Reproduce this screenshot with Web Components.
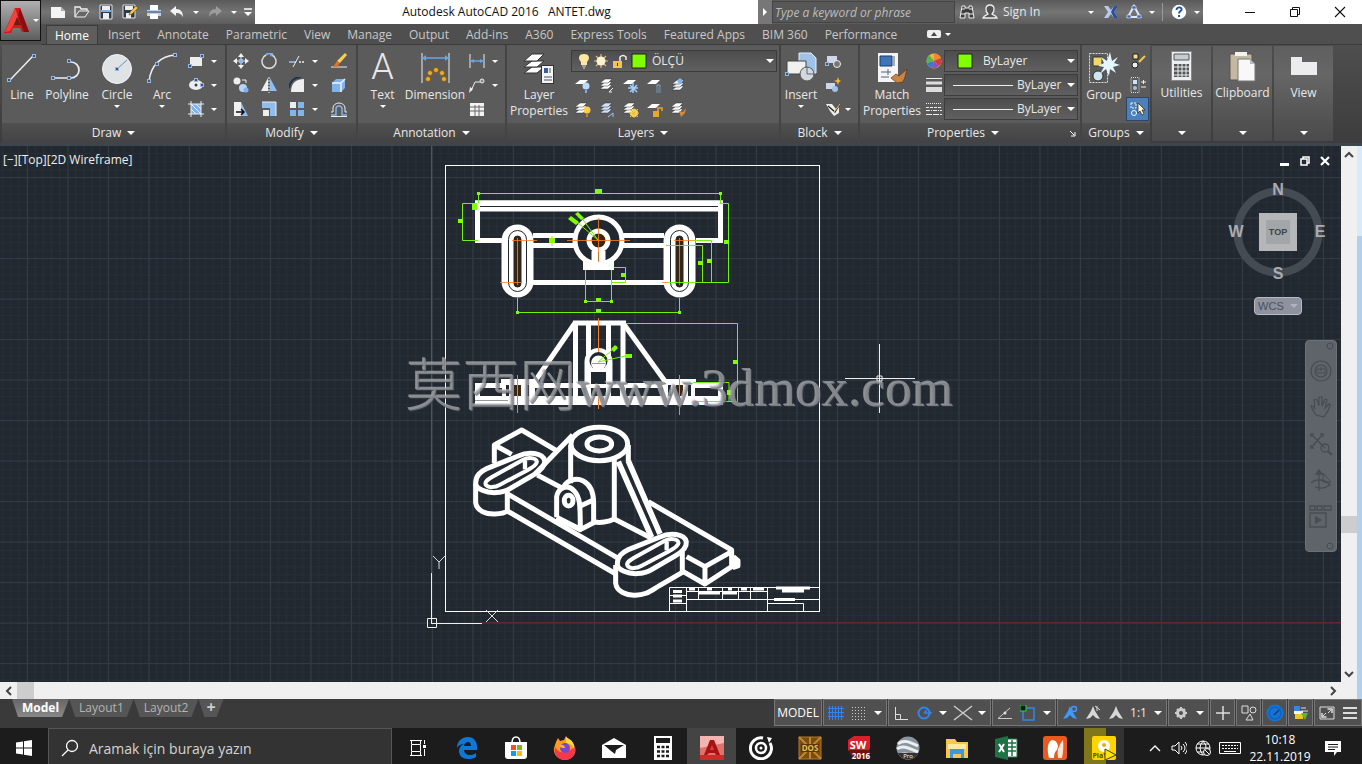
<!DOCTYPE html>
<html lang="tr">
<head>
<meta charset="utf-8">
<title>Autodesk AutoCAD 2016 ANTET.dwg</title>
<style>
	html, body {
		height: 100%;
		margin: 0;
	}
	body {
		font: 12px/16px "Open Sans", "Noto Sans", sans-serif;
		color: #e8e8e8;
		background: #3a3a3a;
		overflow: hidden;
	}
</style>
</head>
<body>
<cad-app></cad-app>

<script>
// icon name -> [width, height, svg markup]
const stack = (x, y, c = "#fff") => `<g fill="${c}" stroke="#333" stroke-width=".5"><path d="M${x} ${y + 8}l5-4h7l-4 4z"/><path d="M${x} ${y + 5}l5-4h7l-4 4z"/><path d="M${x} ${y + 2}l5-4h7l-4 4z"/></g>`;
const sheet = `<path d="M0 6l5-4h8l-4 4z" fill="#fff"/>`;
const node = (x, y) => `<rect x="${x - 1.5}" y="${y - 1.5}" width="3" height="3" fill="#4a4f58" stroke="#8fb8ee"/>`;
const person = (c) => `<path d="M8 1l2 5 5 8-4-1-3-3-3 3-4 1 5-8z" fill="${c}"/>`;

const ICONS = {
	logo: [32, 32, `<path d="M14 3h5l9 24h-7l-2-4-7 0-2 5H3z" fill="#d3171b"/><path d="M14 3l3 9-8 14-5 1z" fill="#f0443b"/><path d="M19 3l9 24h-5L17 11z" fill="#8d0c10"/><path d="M13 20l3-8 4 8z" fill="#6f1a1a"/>`],
	new: [16, 16, `<path d="M1 3h10l4 4v7H1z" fill="#f4f4f4"/><path d="M11 3v4h4z" fill="#aaa"/>`],
	open: [16, 16, `<path d="M1 13V3h5l1 2h6v2" fill="none" stroke="#eee" stroke-width="1.3"/><path d="M1 13l4-6h10l-4 6z" fill="#666" stroke="#eee"/>`],
	save: [16, 16, `<path d="M2 1h12v14H2z" fill="#30394a" stroke="#e4e4e4"/><path d="M5 9h6v6H5zM4 2h8v4H4z" fill="#eee"/><path d="M3 7h10" stroke="#7fb0e4" stroke-width="2"/>`],
	saveas: [16, 16, `<path d="M1 1h12v13H1z" fill="#30394a" stroke="#e4e4e4"/><path d="M4 9h5v5H4zM3 2h8v4H3z" fill="#eee"/><path d="M7 11l1-3 6-6 2 2-6 6z" fill="#f3c648" stroke="#6b4d10" stroke-width=".6"/>`],
	print: [16, 16, `<path d="M4 1h8v5H4z" fill="#fff"/><path d="M1 6h14v6H1z" fill="#b9d4ee"/><path d="M1 8h14" stroke="#334"/><path d="M4 10h8v5H4z" fill="#fff"/>`],
	undo: [16, 16, `<path d="M1 7l6-5v3c5 0 7 3 7 8-2-3-3-4-7-4v3z" fill="#f2f2f2"/>`],
	redo: [16, 16, `<path d="M15 7L9 2v3c-5 0-7 3-7 8 2-3 3-4 7-4v3z" fill="#9c9c9c"/>`],
	customize: [10, 8, `<path d="M1 1h8" stroke="#fff" stroke-width="1.5"/><path d="M1 4h8L5 8z" fill="#fff"/>`],
	caret: [8, 4, `<path d="M0 0h8L4 4z" fill="#fff"/>`],
	smallcaret: [6, 3, `<path d="M0 0h6L3 3z" fill="#fff"/>`],
	play: [6, 8, `<path d="M1 0v8l4-4z" fill="#fff"/>`],
	binoculars: [16, 16, `<path d="M3 2h3v2h4V2h3l2 12h-5V9H6v5H1z" fill="#3c3c3c" stroke="#eee"/><path d="M3 5h3M10 5h3M2 10h4M10 10h4" stroke="#eee"/>`],
	user: [16, 16, `<path d="M1 14c1-3 4-3 5-4C3 7 3 1 8 1s5 6 2 9c1 1 4 1 5 4z" fill="#555" stroke="#eee" stroke-width="1.3"/>`],
	exchange: [16, 16, `<path d="M1 2h4l3 4 3-4h4l-4 6 4 6h-4l-3-4-3 4H1l4-6z" fill="#b8c9ec"/><path d="M11 2h4l-4 6 4 6h-4L8 8z" fill="#2b4f9c"/>`],
	a360: [16, 16, `<path d="M8 2l6 11H2z" fill="none" stroke="#dfe7fa" stroke-width="2"/><path d="M6 2h4v3H6zM1 11h4v3H1zM11 11h4v3h-4z" fill="#4068b4" stroke="#dfe7fa" stroke-width=".6"/>`],
	help: [16, 16, `<circle cx="8" cy="8" r="7.2" fill="#fff"/><path d="M5.5 6c0-4 6-3 5 0-1 1.500-2.500 1.500-2.500 3.500M8 11v2" fill="none" stroke="#1f4f9f" stroke-width="1.900"/>`],
	minimize: [12, 12, `<path d="M1 6.500h10" stroke="#111"/>`],
	restore: [12, 12, `<path d="M1.500 3.500h7v7h-7zM3.500 3V1.500h7v7H9" fill="none" stroke="#111"/>`],
	close: [12, 12, `<path d="M1 1l10 10M11 1L1 11" stroke="#111" stroke-width="1.100"/>`],
	ribbonmode: [14, 8, `<rect width="14" height="8" rx="2" fill="#eee"/><path d="M4 6h6L7 2z" fill="#444"/>`],

	line: [32, 32, `<path d="M4 28L27 4" stroke="#eee" stroke-width="1.500"/>${node(3, 28)}${node(28, 4)}`],
	polyline: [32, 32, `<path d="M2 26h18a8 8 0 0 0 0-16h-2" fill="none" stroke="#eee" stroke-width="1.700"/>${node(2, 26)}${node(18, 26)}${node(18, 9)}`],
	circle: [32, 32, `<circle cx="16" cy="17" r="14.500" fill="#dfe3e6" stroke="#f4f4f4"/><path d="M16 17L26 8" stroke="#6a8cb4"/>${node(16, 17)}`],
	arc: [32, 32, `<path d="M3 29C5 13 15 4 29 3" fill="none" stroke="#eee" stroke-width="1.500"/>${node(3, 29)}${node(11, 12)}${node(29, 3)}`],
	rectangle: [16, 16, `<path d="M2 4h12v9H2z" fill="#eee"/>${node(2, 13)}${node(14, 3)}`],
	ellipse: [16, 16, `<ellipse cx="8" cy="8" rx="7" ry="5" fill="#eee"/><circle cx="8" cy="8" r="1.500" fill="#345"/>${node(14, 8)}${node(8, 3)}`],
	hatch: [16, 16, `<path d="M3 3h10v10H3z" fill="#7fb2ee"/><path d="M3 8l5 5M3 3l10 10M8 3l5 5" stroke="#e4f0ff"/><path d="M3 0v16M13 0v16M0 3h16M0 13h16" stroke="#eee"/>`],
	move: [16, 16, `<path d="M8 0l3 4H5zM8 16l3-4H5zM0 8l4-3v6zM16 8l-4-3v6z" fill="#f2f2f2"/><rect x="6" y="6" width="4" height="4" fill="#8bbaf0"/><path d="M8 4v2M8 10v2M4 8h2M10 8h2" stroke="#eee"/>`],
	rotate: [16, 16, `<path d="M11 2a7 7 0 1 1-6 0" fill="none" stroke="#ddd" stroke-width="1.500"/><path d="M5 2c2-2 5-2 7 0" fill="none" stroke="#7db2ee" stroke-width="2"/><path d="M8 0l4 0-2 4z" fill="#7db2ee"/>`],
	trim: [16, 16, `<path d="M0 9h7" stroke="#9cc3f2" stroke-width="1.500"/><path d="M4 14L10 3" stroke="#eee"/><path d="M10 9h2M13 9h2" stroke="#eee" stroke-width="1.500"/>`],
	erase: [16, 16, `<path d="M0 14h16" stroke="#eee"/><path d="M14 0l2 2-7 8-3-2z" fill="#f5d14d"/><path d="M6 8l3 2-3 4-4 0z" fill="#e2712b"/>`],
	copy: [16, 16, `<circle cx="4" cy="4" r="3.500" fill="#eee"/><circle cx="10" cy="11" r="4" fill="#b8d4f4"/><circle cx="13" cy="13" r="2.500" fill="#7fb2ee"/><path d="M9 3h4v3" stroke="#eee" fill="none"/>`],
	mirror: [16, 16, `<path d="M7 1v13H0z" fill="#eee"/><path d="M9 1v13h7z" fill="#8fbdf0"/><path d="M8 0v16" stroke="#eee" stroke-dasharray="2 1"/>`],
	fillet: [16, 16, `<path d="M2 15C2 7 6 2 15 2v13z" fill="#eee"/><path d="M0 11C1 5 5 0 12 0" fill="none" stroke="#20344e" stroke-width="2"/>`],
	explode: [16, 16, `<path d="M1 6l4-4h9v9l-4 4H1z" fill="#7fb2ee"/><path d="M1 6h9v9M10 6l4-4" fill="none" stroke="#eef5ff" stroke-width="1.500"/>`],
	stretch: [16, 16, `<path d="M1 1h7v14H1z" fill="#f2f2f2"/><path d="M8 1l7 14H8z" fill="#8fbdf0"/><path d="M3 11h7M8 8l3 3-3 3" stroke="#111" stroke-width="1.500" fill="none"/>`],
	scale: [16, 16, `<path d="M1 1h14v14H9V7H1z" fill="#8fbdf0"/><path d="M2 9h6v6H2z" fill="#eee"/><path d="M1 1h14v14" fill="none" stroke="#eee"/>`],
	array: [16, 16, `<path d="M1 1h6v6H1z" fill="#eee"/><path d="M9 1h6v6H9zM1 9h6v6H1zM9 9h6v6H9z" fill="#82b4ee"/>`],
	offset: [16, 16, `<path d="M0 14h5V8a3 3 0 0 1 6 0v6h5" fill="none" stroke="#82b4ee" stroke-width="1.500"/><path d="M0 11h2V7a6 5 0 0 1 12 0v4h2M0 15.500h16" fill="none" stroke="#eee"/>`],
	dimension: [32, 32, `<path d="M3 1v30M30 1v30" stroke="#eee"/><path d="M3 6h27" stroke="#6aa3e8" stroke-width="1.500"/><path d="M3 6l4-3v6zM30 6l-4-3v6z" fill="#6aa3e8"/><g fill="#e8ac2e" stroke="#7a4a0c" stroke-width=".6"><circle cx="9" cy="27" r="2.500"/><circle cx="11" cy="21" r="2.500"/><circle cx="17" cy="18" r="2.500"/><circle cx="23" cy="21" r="2.500"/><circle cx="25" cy="27" r="2.500"/></g>`],
	dimlinear: [16, 16, `<path d="M1 1v14M15 1v14" stroke="#eee"/><path d="M1 8h14" stroke="#6aa3e8" stroke-width="1.500"/><path d="M1 8l4-2v4zM15 8l-4-2v4z" fill="#6aa3e8"/>`],
	leader: [16, 16, `<path d="M2 14L6 5h5" fill="none" stroke="#eee"/><path d="M0 16l1-6 3 2z" fill="#eee"/><circle cx="13" cy="4" r="2" fill="#888" stroke="#eee"/>`],
	table: [16, 16, `<path d="M1 2h14v13H1z" fill="#f2f2f2"/><path d="M1 6h14M1 10h14M6 4v11M10 4v11" stroke="#666"/>`],
	layerprops: [32, 32, `<g fill="#fff" stroke="#333"><path d="M1 21l8-6h12l-7 6z"/><path d="M1 15l8-6h12l-7 6z"/><path d="M1 9l8-7h12l-7 7z"/></g><rect x="18.500" y="13.500" width="12" height="18" fill="#f4f4f4" stroke="#333"/><path d="M21 16h4v5h-4z" fill="#345f9c"/><path d="M27 16v5M21 25h8M21 28h8" stroke="#456"/>`],
	bulb: [12, 16, `<path d="M6 1c6 0 6 5 3 8v3H3V9C0 6 0 1 6 1z" fill="#fbe7a0"/><path d="M4 13h4M5 15h2" stroke="#ddd"/>`],
	sun: [16, 16, `<path d="M8 1v14M1 8h14M3 3l10 10M13 3L3 13" stroke="#e2b888" stroke-width="1.200"/><circle cx="8" cy="8" r="4.500" fill="#fbf2cf"/>`],
	unlock: [16, 16, `<path d="M1 8h9v7H1z" fill="#f1c453"/><path d="M8 8V4q3-3 6 0v3" fill="none" stroke="#eee" stroke-width="1.500"/><path d="M5.500 10v3" stroke="#333"/>`],
	swatch: [16, 16, `<path d="M1 1h14v14H1z" fill="#7fff00" stroke="#222"/>`],
	layoff: [16, 16, `${sheet}<circle cx="11" cy="8" r="3.500" fill="#b9dbff"/><path d="M10 12h2v3h-2z" fill="#7ab0ea"/>`],
	layiso: [16, 16, `${stack(1, 3)}<path d="M14 10l-4 4h3" stroke="#eee" fill="none"/>`],
	layfrz: [16, 16, `${sheet}<path d="M10 5v10M5 10h10M7 7l7 7M14 7l-7 7" stroke="#9fd0ff" stroke-width="1.500"/>`],
	laylock: [16, 16, `${sheet}<path d="M9 9h5v6H9z" fill="#678"/><path d="M10 9V7h3v2" stroke="#8ab" fill="none"/>`],
	laymcur: [16, 16, `${stack(1, 4, "#eef5ff")}<circle cx="9" cy="3" r="2.500" fill="#82b4ee"/>`],
	layon: [16, 16, `${stack(0, 3)}<circle cx="12" cy="8" r="3.500" fill="#fbcf4a"/><path d="M11 12h2v3h-2z" fill="#c87a1c"/>`],
	layuniso: [16, 16, `${stack(1, 3, "#cfe2fa")}<path d="M9 15l5-4v4" stroke="#9cc6fa" fill="none"/>`],
	laythw: [16, 16, `${stack(0, 3)}<circle cx="11" cy="11" r="4" fill="#fbe168"/><path d="M11 6v10M6 11h10M7 7l8 8M15 7l-8 8" stroke="#e9b93c"/>`],
	layulk: [16, 16, `${sheet}<path d="M6 9h6v6H6z" fill="#e9a52c"/><path d="M11 9V6h4v3" stroke="#e9a52c" fill="none" stroke-width="1.500"/>`],
	laymatch: [16, 16, `${stack(0, 3)}<path d="M8 9l4 1 3-4-1 5-4 4z" fill="#d88a34"/>`],
	insert: [32, 32, `<path d="M14 1h12l5 5v15H14z" fill="#9fc2e8" stroke="#e4eefa"/><path d="M2 9h19v13H2z" fill="#f0f0f0" stroke="#444"/><circle cx="22" cy="22" r="7" fill="#d2d8dd" stroke="#555"/><path d="M22 15v7h7" fill="none" stroke="#567"/>${node(2, 22)}`],
	blockedit: [16, 16, `<path d="M2 3h10v7H2z" fill="#cfd6ea"/><circle cx="12" cy="11" r="3.500" fill="#777" stroke="#eee"/>${node(2, 11)}`],
	blocknew: [16, 16, `<path d="M1 6h9v6H1z" fill="#cfd6ea"/><circle cx="10" cy="12" r="3" fill="#9fc2e8"/><path d="M13 0l1 3 2 1-2 1-1 3-1-3-3-1 3-1z" fill="#f6b83a"/>`],
	attrib: [16, 16, `<path d="M1 3h6l4 5 3-3v7l-5 3-4-5z" fill="#eee"/><path d="M3 5l7 6 5-8" fill="none" stroke="#222" stroke-width="1.300"/><path d="M9 11l6-8" stroke="#f2c94a"/>`],
	match: [32, 32, `<path d="M2 1h20v29H2z" fill="#f4f4f4"/><path d="M4 4h12v10H4z" fill="#3f74b8" stroke="#1e3c66"/><path d="M18 4v10M5 20h10M12 17v6M5 25h8" stroke="#567"/><path d="M31 17l-8 7-3-2-5 4 6 5 6-1 2-5z" fill="#c88445" stroke="#5d3312" stroke-width=".7"/>`],
	wheel: [16, 16, `<circle cx="8" cy="8" r="7.500" fill="#e8ba34"/><path d="M8 8V.5A7.500 7.500 0 0 1 15 5z" fill="#ee8a34"/><path d="M8 8l7-3a7.500 7.500 0 0 1-2 8z" fill="#d83a3a"/><path d="M8 8l5 5a7.500 7.500 0 0 1-7 2z" fill="#8752c4"/><path d="M8 8l-2 7a7.500 7.500 0 0 1-5-5z" fill="#3a74d8"/><path d="M8 8l-7 2A7.500 7.500 0 0 1 3 2z" fill="#54b454"/>`],
	lineweight: [16, 16, `<path d="M0 1.500h16" stroke="#eee"/><path d="M0 6h16" stroke="#ddd" stroke-width="3"/><path d="M0 12.500h16" stroke="#ddd" stroke-width="5"/>`],
	linetype: [16, 16, `<path d="M0 2.500h16" stroke="#eee" stroke-dasharray="1 1"/><path d="M0 6.500h16" stroke="#eee" stroke-dasharray="3 1"/><path d="M0 9.500h16" stroke="#eee" stroke-dasharray="4 1 1 1"/><path d="M0 13.500h16" stroke="#eee" stroke-dasharray="6 1"/>`],
	group: [32, 32, `<path d="M1.500 1.500h18v29h-18z" fill="none" stroke="#ddd" stroke-dasharray="2 1"/><path d="M5 5h9v9H5z" fill="#f2d86a" stroke="#333"/><circle cx="10" cy="24" r="5" fill="#cfe7ef" stroke="#333"/><path d="M22 0l2 9 6-4-4 6 6 2-7 2 3 6-6-4-1 7-3-7-6 5 4-7-6-1 6-3-3-6 6 4z" fill="#e4f6ff"/>`],
	groupedit: [16, 16, `<path d="M3 1h5v5H3z" fill="#f2e38a" stroke="#222"/><circle cx="5" cy="12" r="3" fill="#eee" stroke="#222"/><path d="M9 9l6-6" stroke="#f2c94a" stroke-width="2"/>`],
	ungroup: [16, 16, `<path d="M1 .5h8v15H1z" fill="none" stroke="#ddd" stroke-dasharray="1 1"/><path d="M3 3h4v4H3z" fill="#cfe2fa"/><circle cx="5" cy="11" r="2" fill="#9fc2e8"/><path d="M11 5h5M13.500 3v4M11 10h5" stroke="#eee"/>`],
	groupsel: [16, 16, `<path d="M1 2h5v5H1z" fill="none" stroke="#dff" stroke-dasharray="2 1"/><circle cx="4" cy="12" r="2.500" fill="none" stroke="#dff"/><path d="M8 2v10l2-2 2 4 2-1-2-4h3z" fill="#fff7d4" stroke="#222" stroke-width=".7"/>`],
	utilities: [24, 32, `<path d="M1.500 1.500h20v29h-20z" fill="#eceff2" stroke="#888"/><path d="M4 4h15v6H4z" fill="#c8ccd0" stroke="#555"/><path d="M4 14h15v13H4z" fill="#555"/><path d="M4 17h15M4 21h15M4 25h15M8 14v13M12 14v13M16 14v13" stroke="#eceff2" stroke-width="1"/>`],
	clipboard: [28, 32, `<path d="M1 4h22v26H1z" fill="#c5b8a2" stroke="#555"/><path d="M6 2h12v4H6z" fill="#f2f2f2"/><path d="M9 9h12l5 5v17H9z" fill="#f8f8f8" stroke="#777"/><path d="M21 9v5h5" fill="#bbb"/>`],
	viewpanel: [28, 32, `<path d="M1 25V7h11v5h15v13z" fill="#ececee"/>`],
	launcher: [6, 6, `<path d="M0 0l4 4M5 1v4H1" stroke="#fff" fill="none"/>`],

	grid: [16, 16, `<path d="M1.500 1v14M4.500 1v14M7.500 1v14M10.500 1v14M13.500 1v14M0 3.500h16M0 7.500h16M0 11.500h16" stroke="#2f86ee"/>`],
	snap: [16, 16, `<path d="M1 2.500h14M1 5.500h14M1 8.500h14M1 11.500h14M1 14.500h14" stroke="#ccc" stroke-dasharray="1 2"/>`],
	ortho: [16, 16, `<path d="M2.500 2v12.500H15M2.500 9.500h5v5" stroke="#ddd" fill="none"/>`],
	polar: [16, 16, `<circle cx="8" cy="8" r="5.500" fill="none" stroke="#2f86ee" stroke-width="2"/><path d="M8 8h8M8 8l3-3" stroke="#2f86ee" stroke-width="1.500"/>`],
	iso: [20, 16, `<path d="M1 1l18 14M1 15L19 1" stroke="#ccc" stroke-width="1.500"/>`],
	otrack: [16, 16, `<path d="M15 13.500H1L13 3" fill="none" stroke="#ccc"/><circle cx="8" cy="8" r="1.500" fill="#ddd"/>`],
	osnap: [16, 16, `<path d="M3 3h11v12H3z" fill="none" stroke="#2f86ee" stroke-width="1.500"/><rect x="0" y="0" width="6" height="6" fill="#102010" stroke="#2fd04a"/>`],
	annovis: [16, 16, `${person("#3b9aff")}<circle cx="12" cy="4" r="2.500" fill="none" stroke="#3b9aff" stroke-width="1.500"/>`],
	annoauto: [16, 16, `${person("#d8d8d8")}<path d="M10 1l5 4M12 1v5" stroke="#d8d8d8"/>`],
	annoscale: [16, 16, person("#d8d8d8")],
	gear: [16, 16, `<circle cx="8" cy="8" r="3.500" fill="none" stroke="#ccc" stroke-width="3"/><path d="M8 2v2M8 12v2M2 8h2M12 8h2M4 4l1 1M11 11l1 1M12 4l-1 1M5 11l-1 1" stroke="#ccc" stroke-width="2"/>`],
	plus: [16, 16, `<path d="M8 1v14M1 8h14" stroke="#ddd" stroke-width="1.500"/>`],
	isolate: [16, 16, `<path d="M1 1h6v7H1z" fill="none" stroke="#ddd"/><circle cx="12" cy="5" r="3" fill="none" stroke="#ddd"/><path d="M5 15l4-6 3 6z" fill="none" stroke="#ddd"/>`],
	hardware: [18, 18, `<circle cx="9" cy="9" r="8.500" fill="#1673d4"/><circle cx="9" cy="9" r="6" fill="none" stroke="#0f62bc" stroke-width="1.500"/><path d="M8 11l5-5" stroke="#0a3f80" stroke-width="1.500"/>`],
	clean: [16, 16, `<path d="M1 1h6v5H1z" fill="#2f86ee"/><path d="M1 6h9v3H1z" fill="#f5f5f5"/><path d="M2 9h8v5H2z" fill="#f2c22a"/><path d="M8 8h7l-3 7z" fill="#58b83a"/><path d="M8 3h5M8 6h7" stroke="#ddd"/>`],
	fullscreen: [16, 16, `<path d="M1 2h14v12H1z" fill="none" stroke="#ddd"/><path d="M8.500 4H13v4M3 8v4h4.500" fill="none" stroke="#ddd" stroke-width="1.500"/><path d="M9 8l3-3M4 11l3-3" stroke="#ddd"/>`],
	menu: [16, 16, `<path d="M1 3h14M1 8h14M1 13h14" stroke="#ddd" stroke-width="2"/>`],

	windows: [16, 16, `<path d="M0 2.500l7-1v6H0zM8 1.300L16 0v7.500H8zM0 8.500h7v6l-7-1zM8 8.500h8V16l-8-1.300z" fill="#fff"/>`],
	search: [18, 18, `<circle cx="11" cy="7" r="5.500" fill="none" stroke="#fff" stroke-width="1.300"/><path d="M7 11l-6 6" stroke="#fff" stroke-width="1.300"/>`],
	taskview: [16, 16, `<path d="M0 .5h12M0 15.500h12M1.500 1v3M10.500 1v3M1.500 12v3M10.500 12v3M1.500 4.500h9v7h-9zM14.500 0v4M14.500 9v7" fill="none" stroke="#fff"/><path d="M13 5h3v3h-3z" fill="#fff"/>`],
	edge: [24, 24, `<path d="M2 12C2 5 7 1 13 1c6 0 9 5 9 10v3H9c0 3 3 5 6 5 2 0 4-.5 6-2v4c-2 1.500-5 2-8 2-5 0-9-3-9-8 0-3 2-6 5-7-3 0-5 1-7 4zm7-2h7c0-2-1-4-3-4-2 0-4 2-4 4z" fill="#0f78d6"/>`],
	store: [24, 24, `<path d="M8 7C8-1 16-1 16 7" fill="none" stroke="#fff" stroke-width="1.500"/><path d="M1 6h22v14q0 3-3 3H4q-3 0-3-3z" fill="#fff"/><path d="M7 9h5v5H7z" fill="#f25022"/><path d="M13 9h5v5h-5z" fill="#7fba00"/><path d="M7 15h5v5H7z" fill="#00a4ef"/><path d="M13 15h5v5h-5z" fill="#ffb900"/>`],
	firefox: [24, 24, `<path d="M3 6l2-4 2 3 4-1 2-4 3 5 2-1 3 5c4 8-2 15-9 15S0 18 1 12z" fill="#ff9a1f"/><path d="M2 11c4 6 8 8 20 0 2 7-3 13-10 13S0 18 2 11z" fill="#f5384d"/><path d="M13 1c6 3 9 7 8 12-2-5-4-5-8-6z" fill="#ffd83d"/><circle cx="12" cy="12" r="5" fill="#7a45d4"/><path d="M6 9c4-1 6 1 6 3-3 0-5 0-6-3z" fill="#ffb22c"/>`],
	mail: [24, 24, `<path d="M0 9l12-7 12 7v13H0z" fill="#fff"/><path d="M2 9h20l-8 5-1 4-4-3z" fill="#1c1c1c"/>`],
	calc: [20, 24, `<path d="M1 0h18v24H1z" fill="#fff"/><path d="M3 2h14v5H3z" fill="#1c1c1c"/><path d="M4 11h12M4 15.500h12M4 20h12" stroke="#1c1c1c" stroke-width="2.500" stroke-dasharray="3 1.500"/>`],
	autocad: [24, 24, `<path d="M0 0h24v24H0z" fill="#e0716b"/><path d="M0 0h24v7L0 12z" fill="#f3b5b0"/><path d="M0 19h24v5H0z" fill="#cc2b28"/><path d="M10 4h4l6 15h-4l-1-2-6 0-2 2H4z" fill="#a81215"/><path d="M12 9l2 5h-4z" fill="#d8433e"/>`],
	groove: [24, 24, `<path d="M14 2a10.500 10.500 0 1 0 7 5" fill="none" stroke="#fff" stroke-width="3"/><circle cx="12" cy="12" r="5" fill="none" stroke="#fff" stroke-width="2.500"/><circle cx="12" cy="12" r="1.500" fill="#fff"/><path d="M18 1l5 1-3 5z" fill="#fff"/>`],
	dosbox: [24, 24, `<path d="M1 1h22v22H1z" fill="#7c4a12" stroke="#b5792c"/><path d="M1 1l22 22M23 1L1 23M12 1v22" stroke="#b98a2e" stroke-width="2"/><path d="M3 8h18v8H3z" fill="#5c3510"/><text x="12" y="15" font-size="8" font-weight="700" text-anchor="middle" fill="#e8c04a">DOS</text>`],
	solidworks: [24, 24, `<path d="M1 4l6-4h16v13l-3 2H1z" fill="#d8202a"/><path d="M1 14h22v9H6z" fill="#6e1014"/><text x="11" y="13" font-size="11" font-weight="700" text-anchor="middle" fill="#fff">SW</text><text x="14" y="23" font-size="8" font-weight="700" text-anchor="middle" fill="#fff">2016</text>`],
	earth: [24, 24, `<circle cx="12" cy="12" r="11.500" fill="#8a949e"/><path d="M2 8c5-5 12-2 20 2M1 13c5-5 14 0 21 3M4 19c6-3 10 1 14 1" fill="none" stroke="#eceff2" stroke-width="3"/><path d="M2 17h20c-3 8-17 8-20 0z" fill="#333"/><text x="12" y="22" font-size="6" text-anchor="middle" fill="#fff">Pro</text>`],
	explorer: [24, 24, `<path d="M1 3h9l2 3h11v16H1z" fill="#f5c84c"/><path d="M3 8h18v5H3z" fill="#fde9a2"/><path d="M5 13h14v9h-3v-4H8v4H5z" fill="#3f97e0"/>`],
	excel: [24, 24, `<path d="M12 3h11v18H12z" fill="#fff" stroke="#1f7244"/><path d="M14 7h8M14 11h8M14 15h8M18 4v16" stroke="#1f7244" stroke-width="1.500"/><path d="M1 3l13-3v24L1 21z" fill="#1f7244"/><path d="M5 8l5 8M10 8l-5 8" stroke="#fff" stroke-width="2"/>`],
	nitro: [24, 24, `<rect width="24" height="24" rx="3" fill="#ea5a1c"/><path d="M6 22C4 14 4 6 9 4q5 0 6 6l-1 4q-3 2-3 8z" fill="#fff"/><path d="M15 22q-2-10 5-18 1 8-1 18z" fill="#fde4d8"/>`],
	plusapp: [24, 24, `<rect width="24" height="24" rx="2" fill="#ffd400"/><circle cx="12" cy="10" r="6" fill="#fff"/><circle cx="12" cy="9" r="2" fill="#f0a800"/><text x="8" y="22" font-size="7" font-weight="700" text-anchor="middle" fill="#5a4a00">PlaY</text><path d="M13 13l11 6-11 5z" fill="#ffe600" stroke="#4a3c00"/>`],
	up: [12, 12, `<path d="M1 9l5-5 5 5" fill="none" stroke="#fff" stroke-width="1.300"/>`],
	speaker: [16, 16, `<path d="M1 6h3l4-4v12l-4-4H1z" fill="none" stroke="#fff"/><path d="M10 6q2 2 0 4M12 4q4 4 0 8M14 2q5 6 0 12" fill="none" stroke="#fff"/>`],
	globe: [16, 16, `<circle cx="8" cy="8" r="7" fill="none" stroke="#fff"/><path d="M1 8h14M2 4h12M2 12h8M8 1q-6 7 0 14M8 1q4 4 3 8" fill="none" stroke="#fff"/><circle cx="12" cy="12" r="3.500" fill="#1c1c1c" stroke="#fff"/><path d="M10 10l4 4" stroke="#fff"/>`],
	keyboard: [22, 14, `<path d="M.5 1.500h21v11H.5z" fill="none" stroke="#fff"/><path d="M3 4.500h16M3 7.500h16" stroke="#fff" stroke-dasharray="2 1"/><path d="M5 10.500h12" stroke="#fff"/>`],
	notify: [16, 16, `<path d="M0 1h16v11h-4l-3 4v-4H0z" fill="#fff"/><path d="M3 4.500h10M3 7h10M3 9.500h7" stroke="#1c1c1c"/>`],

	mdimin: [12, 12, `<path d="M1 8h9v3H1z" fill="#fff"/>`],
	mdimax: [12, 12, `<path d="M2 4h6v6H2zM4 4V2h6v6H8" fill="none" stroke="#fff" stroke-width="1.500"/>`],
	mdiclose: [12, 12, `<path d="M2 2l8 8M10 2l-8 8" stroke="#fff" stroke-width="2.200"/>`],
	wheelnav: [24, 24, `<circle cx="12" cy="12" r="10" fill="none" stroke="#484c52" stroke-width="1.200"/><circle cx="12" cy="12" r="6" fill="none" stroke="#484c52" stroke-width="1.200"/><path d="M8 10h8v4H8zM12 8v4" fill="none" stroke="#484c52"/>`],
	hand: [24, 24, `<path d="M7 20c-2-3-4-6-5-9q2-1 4 3L5 5q2-1 3 0l2 6V2h3v9l3-7q2 0 2 1l-2 8 4-4q2 1 1 2-2 6-6 11z" fill="none" stroke="#484c52" stroke-width="1.200"/>`],
	zoomnav: [24, 24, `<path d="M2 2l14 14M14 2L2 16M2 5V2h3M11 2h3v3M2 13v3h3" fill="none" stroke="#484c52" stroke-width="1.300"/><circle cx="16" cy="16" r="4" fill="none" stroke="#484c52" stroke-width="1.300"/><path d="M19 19l4 4" stroke="#484c52" stroke-width="2"/>`],
	orbit: [24, 24, `<path d="M10 2v20M10 1l-3 4h6zM2 14q4-4 10-3t9 5q-7 5-15 2" fill="none" stroke="#484c52" stroke-width="1.300"/><path d="M14 4l8 9h-8z" fill="none" stroke="#484c52"/>`],
	motion: [24, 24, `<path d="M1 8h16v14H1zM1 1h5v4H1zM8 1h5v4H8zM15 1h7v4h-7z" fill="none" stroke="#484c52" stroke-width="1.300"/><path d="M6 11l7 4-7 4z" fill="#484c52"/>`],
	ring: [8, 8, `<circle cx="4" cy="4" r="3" fill="none" stroke="#484c52"/>`],
	chevup: [10, 8, `<path d="M1 6l4-4 4 4" fill="none" stroke="#444" stroke-width="2"/>`],
	chevdown: [10, 8, `<path d="M1 2l4 4 4-4" fill="none" stroke="#444" stroke-width="2"/>`],
	chevleft: [8, 10, `<path d="M6 1L2 5l4 4" fill="none" stroke="#444" stroke-width="2"/>`],
	chevright: [8, 10, `<path d="M2 1l4 4-4 4" fill="none" stroke="#444" stroke-width="2"/>`]
};

const icon = (name) => `<cad-icon name="${name}"></cad-icon>`;

/**
 * Base class: clones the markup of the subclass into a shadow root
 */
class CadElement extends HTMLElement {
	constructor() {
		super();
		this.attachShadow({mode: "open"});
	}

	connectedCallback() {
		const template = document.createElement("template");
		template.innerHTML = this.render();
		this.shadowRoot.replaceChildren(template.content.cloneNode(true));
	}
}

const buttonReset = `
	button {
		background: none;
		border: 0;
		margin: 0;
		padding: 0;
		font: inherit;
		color: inherit;
	}
`;

class CadIcon extends CadElement {
	render() {
		const [w, h, body] = ICONS[this.getAttribute("name")];
		return `
		<style>
			:host { display: inline-block; flex: none; width: ${w}px; height: ${h}px; }
			svg { display: block; }
		</style>
		<svg width="${w}" height="${h}" viewBox="0 0 ${w} ${h}" aria-hidden="true">${body}</svg>`;
	}
}
customElements.define("cad-icon", CadIcon);

/**
 * Large ribbon button: icon on top of a label
 */
class RibbonButton extends CadElement {
	render() {
		const glyph = this.hasAttribute("icon") ? icon(this.getAttribute("icon")) : `<span class="glyph">A</span>`;
		return `
		<style>
			:host { display: block; }
			${buttonReset}
			button {
				display: flex;
				flex-direction: column;
				align-items: center;
				width: 100%;
				text-align: center;
			}
			.icon { height: 32px; margin: 3px 0; display: flex; }
			.glyph { font: 300 36px/30px Roboto, sans-serif; }
			.drop { display: flex; padding-top: 2px; }
		</style>
		<button type="button">
			<span class="icon">${glyph}</span>
			<slot></slot>
			${this.hasAttribute("drop") ? `<span class="drop">${icon("smallcaret")}</span>` : ""}
		</button>`;
	}
}
customElements.define("ribbon-button", RibbonButton);

/**
 * Small icon button with an optional drop arrow
 */
class SmallButton extends CadElement {
	render() {
		const name = this.getAttribute("icon");
		return `
		<style>
			:host { display: flex; height: 24px; }
			${buttonReset}
			button { display: grid; place-items: center; width: var(--small-width, 28px); }
			.arrow { width: 14px; padding-right: 6px; }
			:host([active]) button { background: #4f7fb8; outline: 1px solid #2b466a; outline-offset: -1px; }
		</style>
		<button type="button" aria-label="${name}">${icon(name)}</button>
		${this.hasAttribute("drop") ? `<button type="button" class="arrow" aria-label="${name} options">${icon("smallcaret")}</button>` : ""}`;
	}
}
customElements.define("small-button", SmallButton);

/**
 * Ribbon panel with its title strip
 */
class RibbonPanel extends CadElement {
	render() {
		return `
		<style>
			:host {
				display: flex;
				flex-direction: column;
				flex: none;
				box-sizing: border-box;
				border-right: 2px solid #444;
				background: #5b5b5b;
			}
			${buttonReset}
			.body { display: flex; flex: 1; padding-top: 4px; }
			.title {
				display: flex;
				height: 20px;
				background: linear-gradient(#505050, #434343);
			}
			.title button:first-child {
				flex: 1;
				display: flex;
				align-items: center;
				justify-content: center;
				gap: 6px;
			}
			.launch { width: 14px; }
		</style>
		<div class="body"><slot></slot></div>
		<div class="title">
			<button type="button">${this.getAttribute("label")} ${icon("caret")}</button>
			${this.hasAttribute("launcher") ? `<button type="button" class="launch" aria-label="Settings">${icon("launcher")}</button>` : ""}
		</div>`;
	}
}
customElements.define("ribbon-panel", RibbonPanel);

class CollapsedPanel extends CadElement {
	render() {
		return `
		<style>
			:host {
				display: block;
				flex: 0 0 59px;
				margin: 1px 0 2px 2px;
				background: linear-gradient(#5f5f5f, #666 30%, #4a4a4a);
			}
			${buttonReset}
			button {
				display: flex;
				flex-direction: column;
				align-items: center;
				width: 100%;
				height: 100%;
				padding: 4px 0 6px;
				box-sizing: border-box;
			}
			.name { flex: 1; padding-top: 3px; }
		</style>
		<button type="button">
			${icon(this.getAttribute("icon"))}
			<span class="name"><slot></slot></span>
			${icon("caret")}
		</button>`;
	}
}
customElements.define("collapsed-panel", CollapsedPanel);

/**
 * Drop-down box; slotted icons stand before the select
 */
class CadSelect extends CadElement {
	render() {
		const value = this.getAttribute("value");
		return `
		<style>
			:host {
				display: flex;
				align-items: center;
				height: 22px;
				box-sizing: border-box;
				border: 1px solid #3c3c3c;
				background: linear-gradient(#4d4d4d, #606060);
				padding: 0 2px 0 8px;
				gap: 4px;
			}
			select {
				appearance: none;
				flex: 1;
				min-width: 0;
				border: 0;
				padding: 0;
				background: none;
				font: inherit;
				color: inherit;
			}
			.rule { width: 60px; height: 1px; background: #eee; }
		</style>
		<slot></slot>
		${this.hasAttribute("rule") ? `<span class="rule"></span>` : ""}
		<select aria-label="${this.getAttribute("label")}"><option>${value}</option></select>
		${icon("caret")}`;
	}
}
customElements.define("cad-select", CadSelect);

class CadRibbon extends CadElement {
	render() {
		return `
		<style>
			:host {
				display: flex;
				height: 98px;
				background: linear-gradient(#4e4e4e, #3d3d3d);
				border-bottom: 3px solid #3d464e;
				padding-left: 2px;
			}
			.column { flex: none; }
			.draw { width: 225px; }
			.modify { width: 131px; }
			.annotation { width: 149px; }
			.layers { width: 274px; }
			.block { width: 79px; }
			.properties { width: 222px; }
			.groups { width: 68px; border: 0; }
			.w40 { width: 40px; }
			.w44 { width: 44px; }
			.w50 { width: 50px; }
			.w56 { width: 56px; }
			.w64 { width: 64px; }
			.stack { flex: 1; padding: 1px 2px 0 0; }
			.grid { display: grid; grid-template-columns: repeat(5, 24px); --small-width: 24px; padding-top: 2px; }
			.narrow { --small-width: 20px; }
			.tight { --small-width: 23px; }
			.layer { padding-left: 6px; gap: 3px; }
			.layer cad-icon:last-of-type { margin-right: 2px; }
			.props { display: flex; flex-direction: column; gap: 2px; }
			.color { padding-left: 12px; gap: 10px; }
		</style>
		<ribbon-panel class="draw" label="Draw">
			<ribbon-button class="w40" icon="line">Line</ribbon-button>
			<ribbon-button class="w50" icon="polyline">Polyline</ribbon-button>
			<ribbon-button class="w50" icon="circle" drop>Circle</ribbon-button>
			<ribbon-button class="w40" icon="arc" drop>Arc</ribbon-button>
			<div class="column">
				<small-button icon="rectangle" drop></small-button>
				<small-button icon="ellipse" drop></small-button>
				<small-button icon="hatch" drop></small-button>
			</div>
		</ribbon-panel>
		<ribbon-panel class="modify" label="Modify">
			<div class="column">
				<small-button icon="move"></small-button>
				<small-button icon="copy"></small-button>
				<small-button icon="stretch"></small-button>
			</div>
			<div class="column">
				<small-button icon="rotate"></small-button>
				<small-button icon="mirror"></small-button>
				<small-button icon="scale"></small-button>
			</div>
			<div class="column">
				<small-button icon="trim" drop></small-button>
				<small-button icon="fillet" drop></small-button>
				<small-button icon="array" drop></small-button>
			</div>
			<div class="column">
				<small-button icon="erase"></small-button>
				<small-button icon="explode"></small-button>
				<small-button icon="offset"></small-button>
			</div>
		</ribbon-panel>
		<ribbon-panel class="annotation" label="Annotation">
			<ribbon-button class="w50" drop>Text</ribbon-button>
			<ribbon-button class="w56" icon="dimension">Dimension</ribbon-button>
			<div class="column">
				<small-button icon="dimlinear" drop></small-button>
				<small-button icon="leader" drop></small-button>
				<small-button icon="table"></small-button>
			</div>
		</ribbon-panel>
		<ribbon-panel class="layers" label="Layers">
			<ribbon-button class="w64" icon="layerprops">Layer<br>Properties</ribbon-button>
			<div class="stack">
				<cad-select class="layer" label="Layer" value="ÖLÇÜ">
					${["bulb", "sun", "unlock", "swatch"].map(icon).join("")}
				</cad-select>
				<div class="grid">
					${["layoff", "layiso", "layfrz", "laylock", "laymcur", "layon", "layuniso", "laythw", "layulk", "laymatch"].map((n) => `<small-button icon="${n}"></small-button>`).join("")}
				</div>
			</div>
		</ribbon-panel>
		<ribbon-panel class="block" label="Block">
			<ribbon-button class="w40" icon="insert" drop>Insert</ribbon-button>
			<div class="column tight">
				<small-button icon="blockedit"></small-button>
				<small-button icon="blocknew"></small-button>
				<small-button icon="attrib" drop></small-button>
			</div>
		</ribbon-panel>
		<ribbon-panel class="properties" label="Properties" launcher>
			<ribbon-button class="w64" icon="match">Match<br>Properties</ribbon-button>
			<div class="column narrow">
				<small-button icon="wheel"></small-button>
				<small-button icon="lineweight"></small-button>
				<small-button icon="linetype"></small-button>
			</div>
			<div class="stack props">
				<cad-select class="color" label="Object color" value="ByLayer">${icon("swatch")}</cad-select>
				<cad-select label="Lineweight" value="ByLayer" rule></cad-select>
				<cad-select label="Linetype" value="ByLayer" rule></cad-select>
			</div>
		</ribbon-panel>
		<ribbon-panel class="groups" label="Groups">
			<ribbon-button class="w44" icon="group">Group</ribbon-button>
			<div class="column tight">
				<small-button icon="groupedit"></small-button>
				<small-button icon="ungroup"></small-button>
				<small-button icon="groupsel" active></small-button>
			</div>
		</ribbon-panel>
		<collapsed-panel icon="utilities">Utilities</collapsed-panel>
		<collapsed-panel icon="clipboard">Clipboard</collapsed-panel>
		<collapsed-panel icon="viewpanel">View</collapsed-panel>`;
	}
}
customElements.define("cad-ribbon", CadRibbon);

/**
 * Title bar, quick access tools, info center and the ribbon tabs
 */
class CadHeader extends CadElement {
	render() {
		const tabs = ["Home", "Insert", "Annotate", "Parametric", "View", "Manage", "Output", "Add-ins", "A360", "Express Tools", "Featured Apps", "BIM 360", "Performance"];
		const tool = (name, cls = "") => `<button type="button" class="${cls}" aria-label="${name}">${icon(name)}</button>`;
		return `
		<style>
			:host {
				display: grid;
				grid-template-columns: 41px 1fr;
				grid-template-rows: 24px 21px;
				background: #4f4f4f;
			}
			${buttonReset}
			button { display: grid; place-items: center; }
			.app {
				grid-row: 1 / 3;
				align-self: start;
				height: 41px;
				grid-template-columns: 31px 8px;
				border: 1px solid #111;
				background: linear-gradient(#b0b0b0, #5e5e5e);
			}
			.title { display: flex; background: #fff; }
			.quick, .info { display: flex; align-items: center; background: linear-gradient(#5a5a5a, #747474 50%, #5c5c5c); }
			.quick { width: 214px; padding-left: 5px; box-sizing: border-box; }
			.quick button { width: 24px; height: 24px; }
			.quick button.thin { width: 14px; }
			h1 { flex: 1; margin: 0; font: 12px/24px "Open Sans", sans-serif; color: #111; text-align: center; white-space: pre; }
			.info { width: 445px; }
			.info button { width: 23px; height: 24px; flex: none; }
			.info .play { width: 14px; background: #777; }
			.info input {
				flex: 1;
				min-width: 0;
				height: 22px;
				box-sizing: border-box;
				border: 1px solid #444;
				background: #585858;
				padding: 0 2px;
				font: italic 12px "Open Sans", sans-serif;
			}
			.info input::placeholder { color: #bdbdbd; opacity: 1; }
			.info .signin { width: 121px; padding: 0 5px 0 4px; display: flex; align-items: center; }
			.signin span { flex: 1; text-align: left; padding-left: 5px; }
			.info .thin { width: 13px; }
			.sep { width: 1px; height: 18px; background: #999; margin: 0 4px; }
			.window { display: flex; width: 159px; padding-left: 24px; box-sizing: border-box; }
			.window button { width: 46px; }
			nav { display: flex; padding-left: 5px; border-bottom: 1px solid #3b3b3b; box-sizing: border-box; }
			nav a { padding: 2px 8px 0 9px; color: #c8c8c8; text-decoration: none; line-height: 18px; }
			nav a:first-child { padding: 2px 8px 0; background: #5e5e5e; color: #fff; border: 1px solid #3b3b3b; border-bottom: 0; margin: 1px 1px 0 0; line-height: 16px; }
			nav button { display: flex; align-items: center; gap: 4px; margin-left: 22px; }
		</style>
		<button type="button" class="app" aria-label="Application menu">${icon("logo")}${icon("smallcaret")}</button>
		<div class="title">
			<div class="quick">
				${["new", "open", "save", "saveas", "print", "undo"].map((n) => tool(n)).join("")}
				${tool("smallcaret", "thin")}${tool("redo")}${tool("smallcaret", "thin")}${tool("customize", "thin")}
			</div>
			<h1>Autodesk AutoCAD 2016   ANTET.dwg</h1>
			<div class="info">
				${tool("play", "play")}
				<input type="text" placeholder="Type a keyword or phrase" aria-label="Search help">
				${tool("binoculars")}
				<button type="button" class="signin">${icon("user")}<span>Sign In</span>${icon("smallcaret")}</button>
				${tool("exchange")}${tool("a360")}${tool("smallcaret", "thin")}
				<span class="sep"></span>
				${tool("help")}${tool("smallcaret", "thin")}
			</div>
			<div class="window">${tool("minimize")}${tool("restore")}${tool("close")}</div>
		</div>
		<nav>
			${tabs.map((t) => `<a href="#">${t}</a>`).join("")}
			<button type="button" aria-label="Minimize ribbon">${icon("ribbonmode")}${icon("smallcaret")}</button>
		</nav>`;
	}
}
customElements.define("cad-header", CadHeader);

class ViewCube extends CadElement {
	render() {
		return `
		<style>
			:host { display: flex; flex-direction: column; align-items: center; gap: 14px; font-family: "Liberation Sans", sans-serif; }
			.compass {
				display: grid;
				grid-template: 18px 1fr 18px / 18px 1fr 18px;
				place-items: center;
				width: 102px;
				height: 102px;
				font-size: 16px;
				font-weight: 700;
				color: #a9adb1;
				background: radial-gradient(circle, transparent 36px, #444b53 37px, #444b53 44px, transparent 45px);
			}
			.n { grid-area: 1 / 2; }
			.w { grid-area: 2 / 1; }
			.e { grid-area: 2 / 3; }
			.s { grid-area: 3 / 2; }
			button { font: inherit; border: 0; padding: 0; }
			.top {
				grid-area: 2 / 2;
				width: 38px;
				height: 38px;
				border: 7px solid #b4b6b8;
				background: #a3a6a8;
				color: #3f4347;
				font-size: 9px;
			}
			.wcs {
				display: flex;
				align-items: center;
				justify-content: space-around;
				width: 48px;
				height: 18px;
				border: 1px solid #b6bac4;
				border-radius: 4px;
				background: #8e929e;
				color: #4c5058;
				font-size: 11px;
			}
			.wcs cad-icon { opacity: .3; }
		</style>
		<div class="compass">
			<span class="n">N</span><span class="w">W</span>
			<button type="button" class="top">TOP</button>
			<span class="e">E</span><span class="s">S</span>
		</div>
		<button type="button" class="wcs">WCS ${icon("caret")}</button>`;
	}
}
customElements.define("view-cube", ViewCube);

class NavBar extends CadElement {
	render() {
		return `
		<style>
			:host {
				display: flex;
				flex-direction: column;
				align-items: center;
				justify-content: space-between;
				width: 32px;
				height: 212px;
				box-sizing: border-box;
				border-radius: 4px;
				background: #5f646a;
				border: 1px solid #6c7177;
				padding: 1px 0;
			}
			${buttonReset}
			.end { align-self: flex-end; padding-right: 2px; line-height: 8px; }
		</style>
		<span class="end">${icon("ring")}</span>
		${["wheelnav", "hand", "zoomnav", "orbit", "motion"].map((n) => `<button type="button" aria-label="${n}">${icon(n)}</button>`).join("")}
		<span class="end">${icon("ring")}</span>`;
	}
}
customElements.define("nav-bar", NavBar);

/**
 * Model space: grid, drawing, cursor and the in-canvas controls
 */
class ModelViewport extends CadElement {
	get slotView() {
		return `
		<rect x="501.500" y="224.500" width="32" height="73" rx="16" fill="#fff"/>
		<rect x="508.500" y="230.500" width="18" height="61" rx="9" fill="none" stroke="#212830"/>
		<rect x="514" y="236" width="7" height="51" rx="3.500" fill="#3a2412" stroke="#212830"/>
		<path d="M517.500 238V285M512 240.500H537M500 282.500H522" stroke="#ff8020" stroke-opacity=".8" fill="none"/>`;
	}

	get isoSlot() {
		return `
		<path d="M227 250C227 225 242 215 262 205L355 168C385 154 428 158 434 182C436 200 422 212 402 224L330 266C305 281 270 281 247 271C233 265 227 260 227 250Z" stroke-width="15"/>
		<path d="M259 256C251 247 264 238 276 231L368 180C388 169 417 175 409 190C404 199 395 203 385 209L300 254C284 263 266 264 259 256Z" stroke-width="12"/>
		<path d="M375 182V208" stroke-width="13"/>`;
	}

	render() {
		return `
		<style>
			:host { display: block; position: relative; overflow: hidden; background: #212830; }
			.space { display: block; width: 100%; height: 100%; }
			.label { position: absolute; left: 3px; top: 6px; color: #eee; }
			.mdi { position: absolute; right: 10px; top: 9px; display: flex; gap: 8px; }
			view-cube { position: absolute; right: 12px; top: 35px; }
			nav-bar { position: absolute; right: 4px; top: 194px; }
			.mark {
				position: absolute;
				left: 406px;
				top: 199px;
				white-space: nowrap;
				font: 53px/72px "Liberation Serif", serif;
				color: rgb(150 153 157 / 70%);
				text-shadow: 1px 1px 0 rgb(60 64 70 / 60%), -1px -1px 0 rgb(200 202 204 / 60%);
			}
			.mark span { font: 300 57px/72px "Noto Sans CJK SC", sans-serif; }
			${buttonReset}
			button { display: block; line-height: 0; }
		</style>
		<svg class="space">
			<defs>
				<pattern id="minor" width="8.100" height="8.100" x="431.500" y="31.500" patternUnits="userSpaceOnUse">
					<path d="M0 .5H8.100M.5 0V8.100" stroke="#272e37"/>
				</pattern>
				<pattern id="major" width="40.500" height="40.500" x="432" y="31" patternUnits="userSpaceOnUse">
					<path d="M0 .5H40.500M.5 0V40.500" stroke="#323a44"/>
				</pattern>
				<g id="slot">${this.slotView}</g>
				<g id="iso-slot">${this.isoSlot}</g>
			</defs>
			<rect width="100%" height="100%" fill="url(#minor)"/>
			<rect width="100%" height="100%" fill="url(#major)"/>
			<g transform="translate(0 -146)" fill="none">
				<path d="M431.500 146V573" stroke="#1a7a26"/>
				<path d="M482 622.500H4000" stroke="#5c2a2e"/>
				<rect x="445.500" y="165.500" width="374" height="446" stroke="#fff"/>

				<!-- top view -->
				<g stroke="#fff" stroke-width="5">
					<path d="M502 240.500H477.500V203H720.500V240.500H696"/>
					<path d="M475 206H723" stroke-width="11"/>
					<path d="M533 235.500H576M533 245.500H576M621 235.500H664M621 245.500H664M533 282.500H664"/>
					<circle cx="598.500" cy="240.500" r="23.500" fill="#212830"/>
					<circle cx="598.500" cy="240.500" r="9.500" fill="#3a2412"/>
					<path d="M598.500 251V264" stroke-width="14"/>
					<path d="M583 265.500H614" stroke-width="9"/>
				</g>
				<path d="M480 206.500H718M598.500 252V261" stroke="#212830"/>
				<use href="#slot"/>
				<use href="#slot" x="162"/>
				<path d="M567 240.500H630M598.500 218V262M552 236V246" stroke="#ff8020" stroke-opacity=".8"/>

				<!-- front view -->
				<g stroke="#fff" stroke-width="5">
					<path d="M573 323H626M575.500 321V384M588.500 323V384M608.500 323V384M623 321V384"/>
					<path d="M575 323L533 384M623 323L667 384"/>
				</g>
				<path d="M475 383H501V379H534V383H663V379H696V383H723V405H475Z" fill="#fff"/>
				<path d="M480 388h22v8h-22zM506 385h3v11h-3zM526 385h3v11h-3zM535 388h38v8h-38zM578 388h8v8h-8zM591 388h15v8h-15zM611 388h9v8h-9zM626 388h37v8h-37zM668 385h3v11h-3zM688 385h3v11h-3zM695 388h23v8h-23z" fill="#212830"/>
				<path d="M514 385h7v11h-7zM676 385h7v11h-7z" fill="#3a2412"/>
				<path d="M475 400.500H508" stroke="#999"/>
				<path d="M584.500 383V362a14 14 0 0 1 28 0V383z" fill="#fff"/>
				<circle cx="598.500" cy="361" r="9" fill="#212830"/>
				<circle cx="598.500" cy="363" r="7.500" fill="#fff"/>
				<path d="M591 372h15v12h-15z" fill="#212830"/>
				<path d="M517.500 375V413M679.500 375V415M598.500 318V352M598.500 385V409M592 363.500H605" stroke="#ff8020"/>

				<!-- dimensions -->
				<g stroke="#74f010">
					<path d="M478.500 203V193.500H720.500V203M475 203.500H462.500V240.500H478"/>
					<path d="M720 203.500H728.500V282.500H668M693 240.500H711.500V282M666 245.500H702.500V282"/>
					<path d="M614 267.500H625.500V282.500H612M585.500 270V301.500H611.500V270M517.500 298V312.500H679.500V298"/>
					<path d="M626 323.500H737.500V401.500H693M693 382.500H729V401M728 395L737 385"/>
					<path d="M598 240L571 217M598 240L578 213M598 362L630 355M598 362L617 346"/>
				</g>
				<g fill="#7fff00">
					<path d="M595 189h7v4h-7zM458 219h5v4h-5zM724 240h5v4h-5zM698 261h5v4h-5zM707 259h5v4h-5zM621 273h5v4h-5zM596 298h5v3h-5zM596 309h5v3h-5zM733 360h5v4h-5zM625 354h7v4h-7zM549 238h6v5h-6zM472 203h5v7h-5zM727 390h6v5h-6zM477 192h3v3h-3zM719 192h3v3h-3zM584 300h3v3h-3zM610 300h3v3h-3zM516 311h3v3h-3zM678 311h3v3h-3z"/>
					<path d="M568 219l3-3 8 6-3 3zM575 214l3-2 6 6-3 2zM611 349l4-4 3 3-4 4z"/>
				</g>

				<!-- isometric view, drawn in thirds -->
				<g transform="translate(400 400) scale(.3333)" stroke="#fff" stroke-width="15" stroke-linejoin="round">
					<path d="M475 155L365 90L283 135V190M283 135L335 163"/>
					<path d="M227 252V308C230 334 260 343 285 342C305 341 318 336 322 333V275"/>
					<path d="M325 283L655 475M322 333L648 522M412 225L490 266"/>
					<use href="#iso-slot"/>
					<ellipse cx="598" cy="132" rx="85" ry="50"/>
					<ellipse cx="598" cy="132" rx="37" ry="21"/>
					<path d="M512 135V250M685 135V185M643 178V357M518 105L405 222"/>
					<path d="M655 185L755 412M685 183L780 402" stroke-width="17"/>
					<path d="M470 352V290C475 262 503 252 522 272C540 292 541 310 541 388L470 352"/>
					<path d="M490 262C500 240 528 232 550 243C575 256 581 285 581 310V365M541 318L580 300"/>
					<path d="M475 357L541 389L585 366C600 369 625 366 643 357L755 415"/>
					<ellipse cx="506" cy="302" rx="13" ry="16"/>
					<path d="M745 305L995 450V500L915 552L850 515M995 455L915 500L860 470M915 500V552"/>
					<path d="M1000 470L1014 482V498L998 503" fill="#fff"/>
					<use href="#iso-slot" x="425" y="243"/>
					<path d="M647 495V550C650 575 680 587 705 586C740 585 752 572 780 556L847 517V455"/>
				</g>

				<!-- title block -->
				<g stroke="#fff">
					<path d="M669.500 611V587.500H819M686.500 587V611M686.500 599.500H819M669.500 595.500H686M669.500 603.500H686M767.500 603.500H803.500V611M698.500 587V599M722.500 587V599M738.500 587V599M750.500 587V599M767.500 587V611M686 591.500H767"/>
					<path d="M776 588H810M782 591H804M774 599.500H795M673 591.500H682M673 596H682M673 601H682M689 589H695M699 593H720M723 593H737M707 589H712M728 589H732M741 589H747M753 589H764" stroke-width="3"/>
				</g>

				<!-- UCS icon and crosshair -->
				<path d="M427.500 618.500h9v9h-9zM431.500 623V573M431 623.500H482M879.500 344V413M845 378.500H915M877 376h5v5h-5z" stroke="#eee"/>
				<path d="M433 556L439 562L445 556M439 562V569M486 610L498 622M498 610L486 622" stroke="#ddd"/>
			</g>
		</svg>
		<span class="label">[−][Top][2D Wireframe]</span>
		<div class="mark"><span>莫西网</span>www.3dmox.com</div>
		<div class="mdi">
			${["mdimin", "mdimax", "mdiclose"].map((n) => `<button type="button" aria-label="${n}">${icon(n)}</button>`).join("")}
		</div>
		<view-cube></view-cube>
		<nav-bar></nav-bar>`;
	}
}
customElements.define("model-viewport", ModelViewport);

/**
 * Scroll bar; --before and --after share out the free track
 */
class CadScrollbar extends CadElement {
	render() {
		const vertical = this.hasAttribute("vertical");
		return `
		<style>
			:host {
				display: flex;
				flex-direction: ${vertical ? "column" : "row"};
				align-items: stretch;
				background: #f0f0f0;
			}
			${buttonReset}
			button { flex: 0 0 17px; display: grid; place-items: center; }
			.thumb { flex: 0 0 17px; background: #cdcdcd; }
			.before { flex: var(--before, 0) 0 0; }
			.after { flex: var(--after, 1) 0 0; }
		</style>
		<button type="button" aria-label="Back">${icon(vertical ? "chevup" : "chevleft")}</button>
		<span class="before"></span><span class="thumb"></span><span class="after"></span>
		<button type="button" aria-label="Forward">${icon(vertical ? "chevdown" : "chevright")}</button>`;
	}
}
customElements.define("cad-scrollbar", CadScrollbar);

class StatusBar extends CadElement {
	render() {
		const groups = [
			["grid", "snap", "caret"],
			["ortho", "polar", "caret", "iso", "caret"],
			["otrack", "osnap", "caret"],
			["annovis", "annoauto", "annoscale", "1:1", "caret"],
			["gear", "caret"],
			["plus"],
			["isolate"],
			["hardware"],
			["clean"],
			["fullscreen", "menu"]
		];
		const item = (n) => `<button type="button" class="${n === "caret" ? "thin" : ""}" aria-label="${n}">${ICONS[n] ? icon(n) : n}</button>`;
		return `
		<style>
			:host { display: flex; justify-content: space-between; height: 29px; background: #3a3a3a; }
			${buttonReset}
			.tabs { display: flex; padding-left: 12px; color: #b4b4b4; }
			.tabs a {
				height: 18px;
				line-height: 17px;
				padding: 0 10px;
				color: inherit;
				text-decoration: none;
				background: #555;
				clip-path: polygon(0 0, 100% 0, calc(100% - 7px) 100%, 6px 100%);
			}
			.tabs a:first-child { background: linear-gradient(#666, #888); color: #fff; font-weight: 700; }
			.tabs .add { font-size: 16px; font-weight: 700; padding: 0 8px; color: #ccc; }
			.tools { display: flex; gap: 1px; }
			.tools > * {
				display: flex;
				align-items: center;
				height: 27px;
				box-sizing: border-box;
				border: 1px solid #777;
				background: #505050;
			}
			.tools .model { padding: 0 2px; color: #fff; }
			.tools div button { display: grid; place-items: center; min-width: 23px; height: 25px; }
			.tools div .thin { min-width: 16px; }
		</style>
		<nav class="tabs">
			<a href="#">Model</a><a href="#">Layout1</a><a href="#">Layout2</a><a href="#" class="add">+</a>
		</nav>
		<div class="tools">
			<button type="button" class="model">MODEL</button>
			${groups.map((g) => `<div>${g.map(item).join("")}</div>`).join("")}
		</div>`;
	}
}
customElements.define("status-bar", StatusBar);

class TaskBar extends CadElement {
	render() {
		const apps = ["taskview", "edge", "store", "firefox", "mail", "calc", "autocad", "groove", "dosbox", "solidworks", "earth", "explorer", "excel", "nitro", "plusapp"];
		const tray = ["up", "speaker", "globe", "keyboard"];
		const button = (n) => `<button type="button" class="${n}" aria-label="${n}">${icon(n)}</button>`;
		return `
		<style>
			:host { display: flex; height: 36px; background: #1c1c1c; color: #fff; }
			${buttonReset}
			button { display: grid; place-items: center; }
			.start { width: 48px; height: 40px; }
			label {
				display: flex;
				align-items: center;
				gap: 10px;
				width: 344px;
				box-sizing: border-box;
				padding: 3px 10px 0 12px;
				border: solid #555;
				border-width: 1px 1px 0;
				background: #333;
			}
			input { flex: 1; min-width: 0; border: 0; background: none; font: 14px "Open Sans", sans-serif; padding: 0; }
			input::placeholder { color: #d4d4d4; opacity: 1; }
			.apps { display: flex; flex: 1; padding-left: 1px; }
			.apps button { width: 49px; padding-top: 3px; }
			.apps .autocad { background: #444; }
			.apps .plusapp { width: 40px; margin-left: 5px; background: linear-gradient(90deg, #80761c 55%, #333 55%); }
			.tray { display: flex; padding-top: 3px; }
			.tray button { width: 24px; }
			.tray .keyboard { width: 30px; }
			time { width: 70px; font-size: 12px; line-height: 17px; text-align: center; }
			.tray .notify { width: 36px; margin-right: 11px; }
		</style>
		<button type="button" class="start" aria-label="Start">${icon("windows")}</button>
		<label>${icon("search")}<input type="text" placeholder="Aramak için buraya yazın" aria-label="Aramak için buraya yazın"></label>
		<div class="apps">${apps.map(button).join("")}</div>
		<div class="tray">
			${tray.map(button).join("")}
			<time datetime="2019-11-22T10:18">10:18<br>22.11.2019</time>
			${button("notify")}
		</div>`;
	}
}
customElements.define("task-bar", TaskBar);

class CadApp extends CadElement {
	render() {
		return `
		<style>
			:host { display: flex; flex-direction: column; height: 100vh; }
			main {
				flex: 1;
				min-height: 0;
				display: grid;
				grid-template: 1fr 17px / 1fr 16px 5px;
				background: #f0f0f0;
			}
			.v { --before: 335; --after: 125; }
			.edge { grid-row: 1 / 3; grid-column: 3; background: linear-gradient(#dbeaf8 90px, #b4cfe9 90px); }
			.h { grid-row: 2; grid-column: 1; }
		</style>
		<cad-header></cad-header>
		<cad-ribbon></cad-ribbon>
		<main>
			<model-viewport></model-viewport>
			<cad-scrollbar class="v" vertical></cad-scrollbar>
			<span class="edge"></span>
			<cad-scrollbar class="h"></cad-scrollbar>
		</main>
		<status-bar></status-bar>
		<task-bar></task-bar>`;
	}
}
customElements.define("cad-app", CadApp);
</script>
</body>
</html>
